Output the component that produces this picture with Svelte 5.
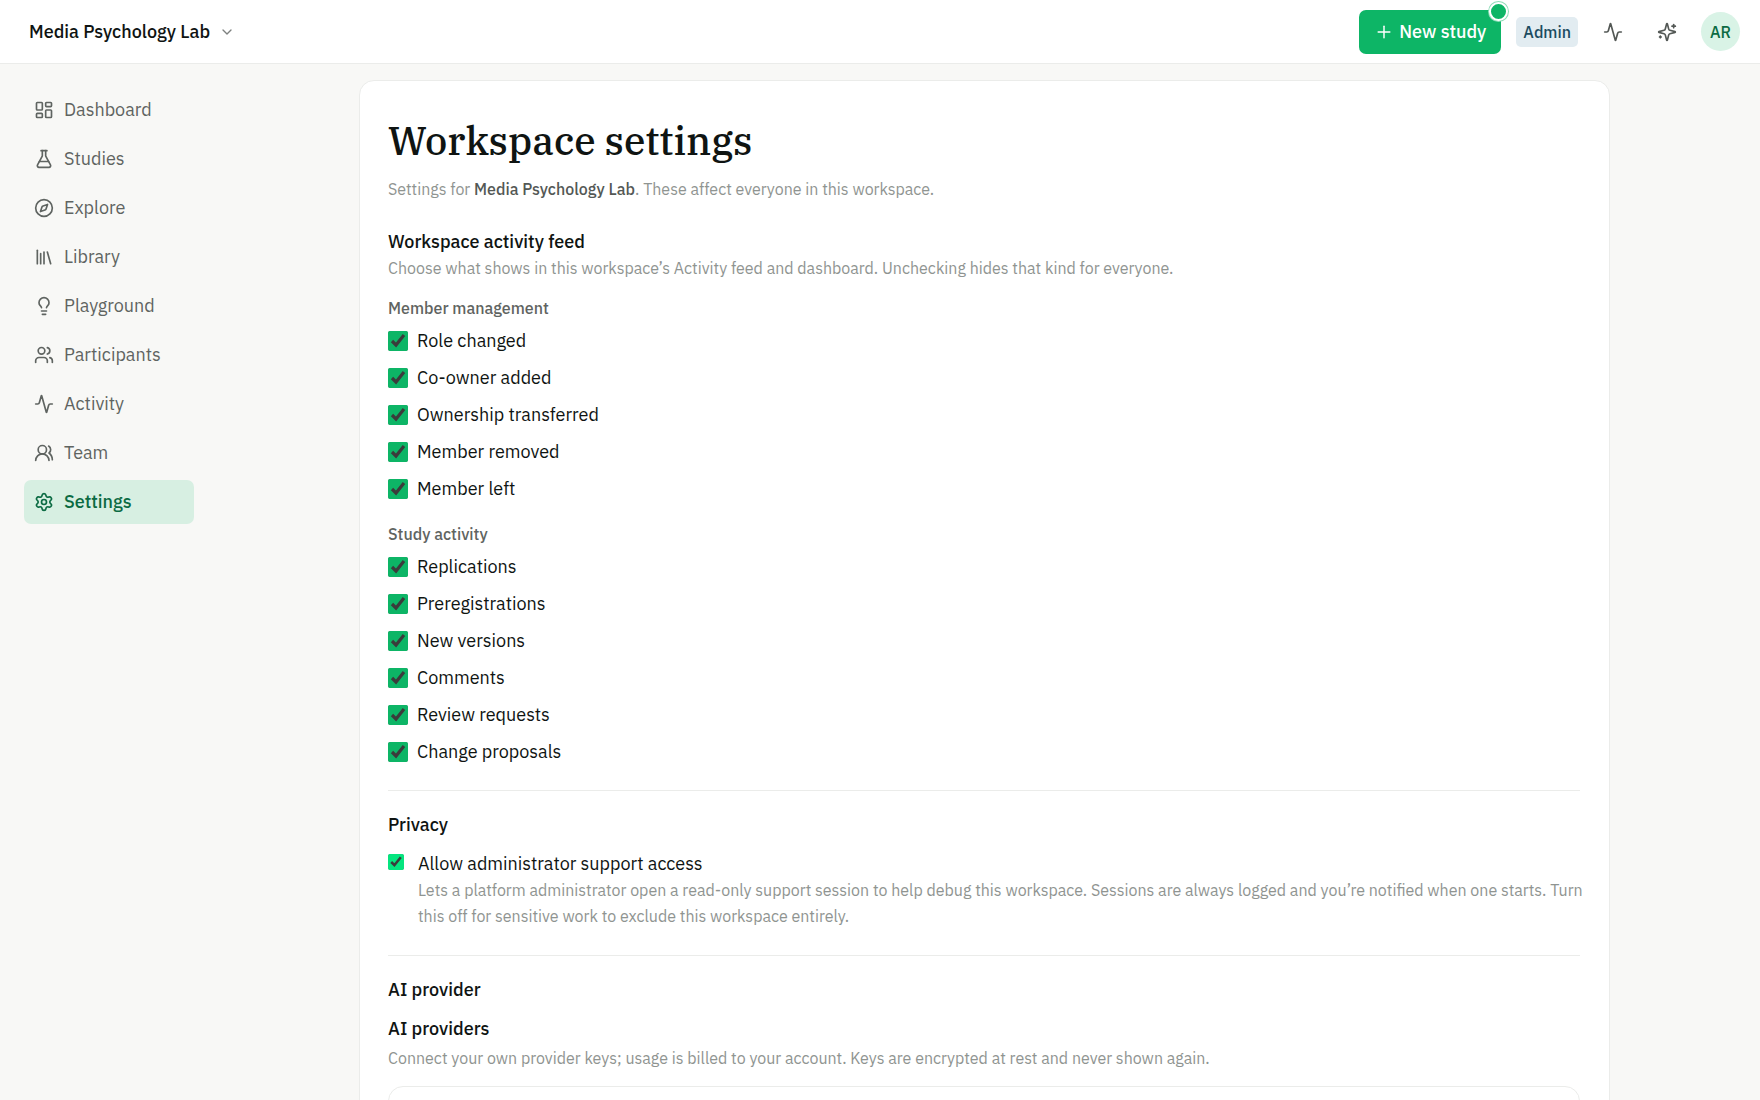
<script>
  import { onMount } from 'svelte';

  const workspace = 'Media Psychology Lab';

  const nav = [
    { label: 'Dashboard', icon: 'dashboard' },
    { label: 'Studies', icon: 'flask' },
    { label: 'Explore', icon: 'compass' },
    { label: 'Library', icon: 'library' },
    { label: 'Playground', icon: 'bulb' },
    { label: 'Participants', icon: 'users' },
    { label: 'Activity', icon: 'activity' },
    { label: 'Team', icon: 'team' },
    { label: 'Settings', icon: 'settings' }
  ];

  const paths = {
    dashboard: ['M4 3h5a1 1 0 0 1 1 1v7a1 1 0 0 1-1 1H4a1 1 0 0 1-1-1V4a1 1 0 0 1 1-1z', 'M15 3h5a1 1 0 0 1 1 1v3a1 1 0 0 1-1 1h-5a1 1 0 0 1-1-1V4a1 1 0 0 1 1-1z', 'M15 12h5a1 1 0 0 1 1 1v7a1 1 0 0 1-1 1h-5a1 1 0 0 1-1-1v-7a1 1 0 0 1 1-1z', 'M4 16h5a1 1 0 0 1 1 1v3a1 1 0 0 1-1 1H4a1 1 0 0 1-1-1v-3a1 1 0 0 1 1-1z'],
    flask: ['M14 2v6a2 2 0 0 0 .245.96l5.51 10.08A2 2 0 0 1 18 22H6a2 2 0 0 1-1.755-2.96l5.51-10.08A2 2 0 0 0 10 8V2', 'M6.453 15h11.094', 'M8.5 2h7'],
    compass: ['M12 2a10 10 0 1 0 0 20 10 10 0 0 0 0-20z', 'm16.24 7.76-1.804 5.411a2 2 0 0 1-1.265 1.265L7.76 16.24l1.804-5.411a2 2 0 0 1 1.265-1.265z'],
    library: ['m16 6 4 14', 'M12 6v14', 'M8 8v12', 'M4 4v16'],
    bulb: ['M15 14c.2-1 .7-1.7 1.5-2.5 1-.9 1.5-2.2 1.5-3.5A6 6 0 0 0 6 8c0 1 .2 2.2 1.5 3.5.7.7 1.3 1.5 1.5 2.5', 'M9 18h6', 'M10 22h4'],
    users: ['M16 21v-2a4 4 0 0 0-4-4H6a4 4 0 0 0-4 4v2', 'M9 3a4 4 0 1 0 0 8 4 4 0 0 0 0-8z', 'M22 21v-2a4 4 0 0 0-3-3.87', 'M16 3.13a4 4 0 0 1 0 7.75'],
    activity: ['M22 12h-2.48a2 2 0 0 0-1.93 1.46l-2.35 8.36a.25.25 0 0 1-.48 0L9.24 2.18a.25.25 0 0 0-.48 0l-2.35 8.36A2 2 0 0 1 4.49 12H2'],
    team: ['M18 21a8 8 0 0 0-16 0', 'M10 3a5 5 0 1 0 0 10 5 5 0 0 0 0-10z', 'M22 20c0-3.37-2-6.5-4-8a5 5 0 0 0-.45-8.3'],
    settings: ['M9.671 4.136a2.34 2.34 0 0 1 4.659 0 2.34 2.34 0 0 0 3.319 1.915 2.34 2.34 0 0 1 2.33 4.033 2.34 2.34 0 0 0 0 3.831 2.34 2.34 0 0 1-2.33 4.033 2.34 2.34 0 0 0-3.319 1.915 2.34 2.34 0 0 1-4.659 0 2.34 2.34 0 0 0-3.32-1.915 2.34 2.34 0 0 1-2.33-4.033 2.34 2.34 0 0 0 0-3.831A2.34 2.34 0 0 1 6.35 6.051a2.34 2.34 0 0 0 3.319-1.915', 'M12 9a3 3 0 1 0 0 6 3 3 0 0 0 0-6z'],
    sparkles: ['M9.937 15.5A2 2 0 0 0 8.5 14.063l-6.135-1.582a.5.5 0 0 1 0-.962L8.5 9.936A2 2 0 0 0 9.937 8.5l1.582-6.135a.5.5 0 0 1 .963 0L14.063 8.5A2 2 0 0 0 15.5 9.937l6.135 1.581a.5.5 0 0 1 0 .964L15.5 14.063a2 2 0 0 0-1.437 1.437l-1.582 6.135a.5.5 0 0 1-.963 0z', 'M20 3v4', 'M22 5h-4', 'M4 17v2', 'M5 18H3'],
    chevron: ['m6 9 6 6 6-6'],
    plus: ['M5 12h14', 'M12 5v14']
  };

  let groups = $state([
    {
      title: 'Member management',
      items: ['Role changed', 'Co-owner added', 'Ownership transferred', 'Member removed', 'Member left'].map((label) => ({ label, on: true }))
    },
    {
      title: 'Study activity',
      items: ['Replications', 'Preregistrations', 'New versions', 'Comments', 'Review requests', 'Change proposals'].map((label) => ({ label, on: true }))
    }
  ]);

  let supportAccess = $state(true);
  let current = $state('Settings');

  onMount(() => {
    document.title = 'Workspace settings';
  });
</script>

{#snippet icon(name)}
  <svg class="icon icon-{name}" viewBox="0 0 24 24" aria-hidden="true">
    {#each paths[name] as d}
      <path {d} />
    {/each}
  </svg>
{/snippet}

<div class="app">
  <header class="topbar">
    <button class="switcher" type="button">
      {workspace}
      {@render icon('chevron')}
    </button>
    <div class="actions">
      <button class="new-study" type="button">
        {@render icon('plus')}
        New study
        <span class="dot"></span>
      </button>
      <span class="role">Admin</span>
      <button class="icon-button" type="button" aria-label="Activity">{@render icon('activity')}</button>
      <button class="icon-button" type="button" aria-label="Assistant">{@render icon('sparkles')}</button>
      <button class="avatar" type="button">AR</button>
    </div>
  </header>

  <div class="body">
    <nav class="sidebar">
      {#each nav as item}
        <a
          href="#{item.icon}"
          class="nav-item"
          class:active={current === item.label}
          onclick={() => (current = item.label)}
        >
          {@render icon(item.icon)}
          {item.label}
        </a>
      {/each}
    </nav>

    <main class="main">
      <div class="card">
        <h1>Workspace settings</h1>
        <p class="hint">Settings for <strong>{workspace}</strong>. These affect everyone in this workspace.</p>

        <section class="feed">
          <h2>Workspace activity feed</h2>
          <p class="hint">Choose what shows in this workspace’s Activity feed and dashboard. Unchecking hides that kind for everyone.</p>
          {#each groups as group}
            <fieldset>
              <legend>{group.title}</legend>
              {#each group.items as item}
                <label class="check">
                  <input type="checkbox" bind:checked={item.on} />
                  {item.label}
                </label>
              {/each}
            </fieldset>
          {/each}
        </section>

        <section class="divided">
          <h2>Privacy</h2>
          <div class="support">
            <input id="support-access" type="checkbox" bind:checked={supportAccess} />
            <div>
              <label for="support-access">Allow administrator support access</label>
              <p class="hint">
                Lets a platform administrator open a read-only support session to help debug this workspace. Sessions are always logged and you’re notified when one starts. Turn this off for sensitive work to exclude this workspace entirely.
              </p>
            </div>
          </div>
        </section>

        <section class="divided">
          <h2>AI provider</h2>
          <h3>AI providers</h3>
          <p class="hint">Connect your own provider keys; usage is billed to your account. Keys are encrypted at rest and never shown again.</p>
          <div class="providers"></div>
        </section>
      </div>
    </main>
  </div>
</div>

<style>
  :global(body) {
    background: #f8f8f6;
  }

  .app {
    height: 100vh;
    display: flex;
    flex-direction: column;
    overflow: hidden;
    background: #f8f8f6;
    color: #0f1412;
    font-family: 'IBM Plex Sans', 'Noto Sans', sans-serif;
    font-size: 18px;
    line-height: 26px;
  }

  button {
    font: inherit;
    color: inherit;
    background: none;
    border: 0;
    padding: 0;
    cursor: pointer;
  }

  .icon {
    width: 20px;
    height: 20px;
    flex: none;
    fill: none;
    stroke: currentColor;
    stroke-width: 2;
    stroke-linecap: round;
    stroke-linejoin: round;
  }

  /* top bar */

  .topbar {
    display: flex;
    align-items: center;
    justify-content: space-between;
    flex: none;
    height: 63px;
    padding: 0 20px 0 29px;
    background: #fff;
    border-bottom: 1px solid #ebecea;
  }
  .switcher {
    display: flex;
    align-items: center;
    gap: 9px;
    font-weight: 500;
  }
  .icon-chevron {
    width: 16px;
    height: 16px;
    color: #7d817f;
  }
  .actions {
    display: flex;
    align-items: center;
    gap: 15px;
  }
  .new-study {
    position: relative;
    display: flex;
    align-items: center;
    gap: 5px;
    height: 44px;
    padding: 0 15px;
    border-radius: 7px;
    background: #0db566;
    color: #fff;
    font-weight: 500;
  }
  .icon-plus {
    stroke-width: 1.75;
  }
  .dot {
    position: absolute;
    top: -8px;
    right: -7px;
    width: 15px;
    height: 15px;
    border: 2px solid #fff;
    border-radius: 50%;
    background: #0db566;
    box-shadow: 0 0 0 1px #8fdcb8;
  }
  .role {
    padding: 2px 7px;
    border-radius: 5px;
    background: #e2ecf1;
    color: #1b4b60;
    font-size: 16px;
    font-weight: 500;
  }
  .icon-button {
    display: flex;
    align-items: center;
    justify-content: center;
    width: 39px;
    height: 39px;
    color: #535855;
  }
  .avatar {
    width: 39px;
    height: 39px;
    border-radius: 50%;
    background: #d9f3e6;
    color: #0b6b43;
    font-size: 16px;
    font-weight: 500;
  }

  /* navigation */

  .body {
    display: flex;
    flex: 1;
    min-height: 0;
  }
  .sidebar {
    display: flex;
    flex-direction: column;
    flex: none;
    gap: 5px;
    width: 170px;
    padding: 24px 15px 24px 24px;
  }
  .nav-item {
    display: flex;
    align-items: center;
    gap: 10px;
    height: 44px;
    padding: 0 10px;
    border-radius: 7px;
    color: #5f6461;
    text-decoration: none;
  }
  .nav-item.active {
    background: #d7efe2;
    color: #0b6b43;
    font-weight: 500;
  }

  /* content */

  .main {
    flex: 1;
    min-width: 0;
    padding: 16px 24px 0;
    overflow: hidden;
  }
  .card {
    box-sizing: border-box;
    max-width: 1251px;
    margin: 0 auto;
    padding: 33px 29px 40px 28px;
    background: #fff;
    border: 1px solid #ebecea;
    border-radius: 15px;
  }
  h1,
  h2,
  h3,
  p {
    margin: 0;
  }
  h1 {
    margin-bottom: 8px;
    font-family: 'IBM Plex Serif', 'DejaVu Serif Condensed', 'DejaVu Serif', serif;
    font-size: 39px;
    font-weight: 500;
    line-height: 54px;
  }
  h2,
  h3 {
    font-size: 18px;
    font-weight: 500;
    line-height: 26px;
  }
  .hint {
    color: #8f9491;
    font-size: 16px;
    line-height: 26px;
  }
  .hint strong {
    color: #535855;
    font-weight: 500;
  }
  .feed {
    margin-top: 27px;
  }
  fieldset {
    margin: 0;
    padding: 14px 0 0;
    border: 0;
  }
  legend {
    float: left;
    width: 100%;
    margin-bottom: 1px;
    padding: 0;
    color: #5f6461;
    font-size: 16px;
    font-weight: 500;
    line-height: 26px;
  }
  .check {
    display: flex;
    align-items: center;
    gap: 9px;
    clear: both;
    height: 37px;
  }
  input[type='checkbox'] {
    flex: none;
    width: 20px;
    height: 20px;
    margin: 0;
    accent-color: #0db566;
  }
  .divided {
    margin-top: 20px;
    padding-top: 21px;
    border-top: 1px solid #ebecea;
  }
  .support {
    display: flex;
    gap: 14px;
    margin: 13px -4px 26px 0;
  }
  .support input[type='checkbox'] {
    width: 16px;
    height: 16px;
    margin-top: 3px;
    accent-color: #05e57f;
  }
  h3 {
    margin: 13px 0 3px;
  }
  .providers {
    height: 120px;
    margin-top: 15px;
    border: 1px solid #ebecea;
    border-radius: 15px;
  }
</style>
